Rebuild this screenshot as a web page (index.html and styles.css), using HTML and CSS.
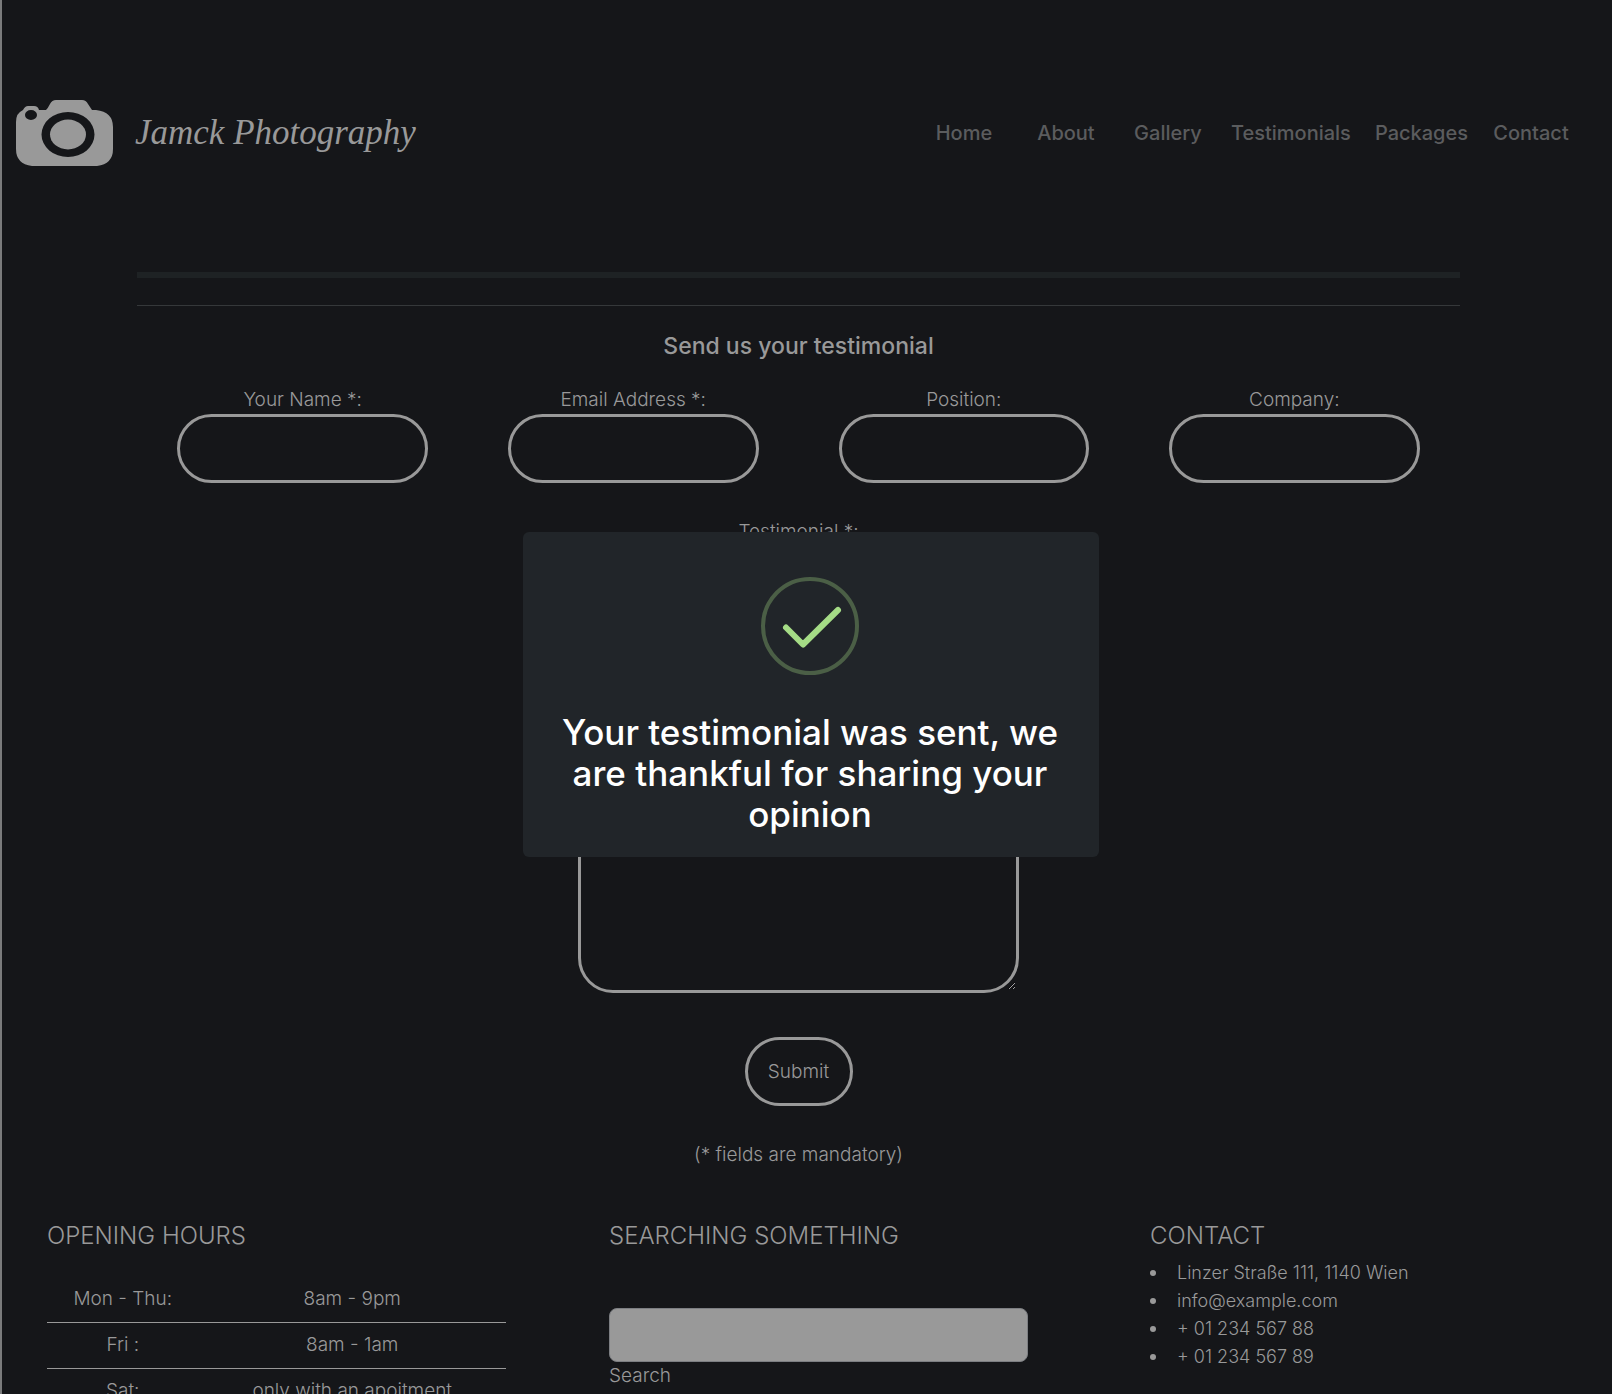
FILE: index.html
```html
<!DOCTYPE html>
<html lang="en">
<head>
<meta charset="utf-8">
<title>Jamck Photography</title>
<link rel="stylesheet" href="styles.css">
</head>
<body>
<header class="site-header">
  <a class="brand" href="#">
    <svg class="brand-icon" viewBox="0 0 97 66" aria-hidden="true">
      <path fill="#999" fill-rule="evenodd" d="M16 66Q0 64 0 49V22Q0 13 7 10Q9 6 12 6H18Q22 6 23 10H30Q32 8 34 4Q36 0 40 0H66Q70 0 72 4L76 10H80Q97 12 97 27V49Q97 64 81 66ZM15 10A6 5 0 1 0 15 20A6 5 0 1 0 15 10ZM52 12A26.500 22.500 0 1 0 52 57A26.500 22.500 0 1 0 52 12Z"/>
      <ellipse cx="52" cy="34.500" rx="18" ry="15" fill="#999"/>
    </svg>
    <span class="brand-name">Jamck Photography</span>
  </a>
  <nav class="nav">
    <a href="#">Home</a>
    <a href="#">About</a>
    <a href="#">Gallery</a>
    <a href="#">Testimonials</a>
    <a href="#">Packages</a>
    <a href="#">Contact</a>
  </nav>
</header>

<main class="content">
  <hr class="rule-thick">
  <hr class="rule-thin">
  <form class="form">
    <h1 class="form-title">Send us your testimonial</h1>
    <div class="fields">
      <div class="field"><label for="name">Your Name *:</label><input class="pill" id="name" type="text"></div>
      <div class="field"><label for="email">Email Address *:</label><input class="pill" id="email" type="email"></div>
      <div class="field"><label for="position">Position:</label><input class="pill" id="position" type="text"></div>
      <div class="field"><label for="company">Company:</label><input class="pill" id="company" type="text"></div>
    </div>
    <div class="message">
      <label for="testimonial">Testimonial *:</label>
      <textarea id="testimonial"></textarea>
    </div>
    <button class="pill submit" type="button">Submit</button>
    <p class="note">(* fields are mandatory)</p>
  </form>
</main>

<footer class="footer">
  <section>
    <h2>OPENING HOURS</h2>
    <table class="hours">
      <tr><th scope="row">Mon - Thu:</th><td>8am - 9pm</td></tr>
      <tr><th scope="row">Fri :</th><td>8am - 1am</td></tr>
      <tr><th scope="row">Sat:</th><td>only with an apoitment</td></tr>
    </table>
  </section>
  <section>
    <h2>SEARCHING SOMETHING</h2>
    <div class="search">
      <input id="search" type="search">
      <label for="search">Search</label>
    </div>
  </section>
  <section>
    <h2>CONTACT</h2>
    <ul class="contact">
      <li>Linzer Straße 111, 1140 Wien</li>
      <li>info@example.com</li>
      <li>+ 01 234 567 88</li>
      <li>+ 01 234 567 89</li>
    </ul>
  </section>
</footer>

<div class="overlay">
  <div class="dialog" role="dialog" aria-modal="true" aria-labelledby="dialog-title">
    <svg class="check" viewBox="0 0 98 98" aria-hidden="true">
      <circle cx="49" cy="49" r="47" fill="none" stroke="#4b5f46" stroke-width="4"/>
      <path d="M25 50.500L42 67.500L77 33" fill="none" stroke="#a5dc86" stroke-width="6" stroke-linecap="round" stroke-linejoin="round"/>
    </svg>
    <h2 class="dialog-title" id="dialog-title">Your testimonial was sent, we are thankful for sharing your opinion</h2>
  </div>
</div>
</body>
</html>
```
FILE: styles.css
```css
* {
  box-sizing: border-box;
}

body {
  height: 100vh;
  margin: 0;
  padding-right: 17px;
  overflow: hidden;
  border-left: 2px solid #7a7b7c;
  background: #151619;
  color: #999;
  font: 300 19px/28px Inter, "Open Sans", sans-serif;
}

h1, h2, p, ul, hr {
  margin: 0;
}

/* Header */
.site-header {
  display: flex;
  align-items: center;
  justify-content: space-between;
  padding: 100px 13px 0 14px;
}

.brand {
  display: flex;
  align-items: center;
  gap: 22px;
  color: #999;
  text-decoration: none;
}

.brand-icon {
  width: 97px;
  height: 66px;
}

.brand-name {
  font: italic 400 35px/48px "Liberation Serif", cursive;
}

.nav {
  display: flex;
}

.nav a {
  min-width: 102px;
  padding: 0 12px;
  color: #5b5c5e;
  font-size: 20px;
  font-weight: 500;
  text-align: center;
  text-decoration: none;
}

/* Testimonial form */
.content {
  width: 83%;
  margin: 106px auto 0;
}

.rule-thick {
  height: 6px;
  border: 0;
  background: #1e2224;
}

.rule-thin {
  height: 1px;
  margin-top: 27px;
  border: 0;
  background: #35383a;
}

.form {
  display: flex;
  flex-direction: column;
  align-items: center;
  padding-top: 26px;
}

.form-title {
  font-size: 23px;
  font-weight: 500;
  line-height: 28px;
}

.fields {
  display: grid;
  grid-template-columns: repeat(4, 1fr);
  align-self: stretch;
  margin-top: 26px;
}

.field {
  display: flex;
  flex-direction: column;
  padding: 0 40px;
  text-align: center;
}

.pill {
  height: 69px;
  border: 3px solid #999;
  border-radius: 35px;
  background: transparent;
  color: #999;
  font: inherit;
}

.field .pill {
  width: 100%;
  padding: 0 18px;
}

.message {
  display: flex;
  flex-direction: column;
  align-items: center;
  width: 33.333%;
  margin-top: 35px;
}

textarea {
  width: 100%;
  height: 447px;
  padding: 18px;
  border: 3px solid #999;
  border-radius: 35px;
  background: transparent;
  color: #999;
  font: inherit;
  color-scheme: dark;
}

.submit {
  min-width: 108px;
  margin-top: 44px;
  padding: 0 18px;
}

.note {
  margin-top: 35px;
}

/* Footer */
.footer {
  display: grid;
  grid-template-columns: 562fr 541fr 445fr;
  margin-top: 53px;
  padding-left: 45px;
}

.footer h2 {
  font-size: 24px;
  font-weight: 300;
  line-height: 28px;
}

.hours {
  width: 459px;
  margin-top: 26px;
  border-collapse: collapse;
  text-align: center;
}

.hours th {
  width: 33%;
  font-weight: 300;
}

.hours th,
.hours td {
  height: 46px;
  padding: 0;
  border-bottom: 1px solid #999;
}

.search {
  display: flex;
  flex-direction: column;
  width: 419px;
  margin-top: 58px;
}

.search input {
  height: 54px;
  padding: 0 12px;
  border: 1px solid #7c7e82;
  border-radius: 8px;
  background: #999;
  font: inherit;
  appearance: none;
}

.contact {
  margin-top: 9px;
  padding: 0;
  font-size: 18px;
  list-style: none;
}

.contact li {
  display: flex;
  align-items: center;
  gap: 21px;
}

.contact li::before {
  width: 6px;
  height: 6px;
  border-radius: 50%;
  background: #999;
  content: "";
}

/* Confirmation dialog */
.overlay {
  position: fixed;
  inset: 0;
  display: flex;
  align-items: center;
  justify-content: center;
  padding: 0 0 5px 10px;
}

.dialog {
  display: flex;
  flex-direction: column;
  align-items: center;
  width: 576px;
  padding: 45px 29px 22px 27px;
  border-radius: 6px;
  background: #212529;
  text-align: center;
}

.check {
  width: 98px;
  height: 98px;
}

.dialog-title {
  margin-top: 37px;
  color: #fff;
  font-size: 35px;
  font-weight: 500;
  line-height: 41px;
}
```
